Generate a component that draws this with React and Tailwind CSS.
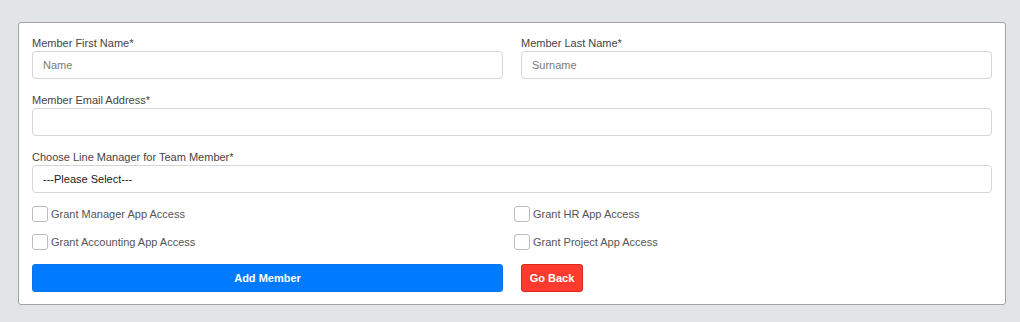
import React from "react";

const font = { fontFamily: '"Liberation Sans", Arial, sans-serif' };

function Field({ label, placeholder, className = "" }) {
  return (
    <div className={className}>
      <div className="h-[15px] text-[11px] leading-[15px] text-[#444]">{label}</div>
      <input
        placeholder={placeholder}
        className="block w-full h-[28px] border border-[#d6d6d6] rounded-[4px] px-[10px] text-[11px] text-[#333] placeholder:text-[#7a7a7a] outline-none bg-white"
      />
    </div>
  );
}

function Check({ label }) {
  return (
    <label className="flex items-center h-[28px] gap-[3px] text-[11px] text-[#555]">
      <span className="w-[16px] h-[16px] border border-[#bdbdbd] rounded-[3px] bg-white shrink-0" />
      <span>{label}</span>
    </label>
  );
}

export default function App() {
  return (
    <div className="w-[1020px] h-[322px] bg-[#e2e5e6] pt-[22px] pl-[18px]" style={font}>
      <div className="w-[988px] bg-white border border-[#a3a3a3] rounded-[3px] px-[13px] pt-[13px] pb-[12px]">
        <div className="grid grid-cols-2 gap-x-[18px]">
          <Field label="Member First Name*" placeholder="Name" />
          <Field label="Member Last Name*" placeholder="Surname" />
        </div>
        <Field className="mt-[14px]" label="Member Email Address*" placeholder="" />
        <div className="mt-[14px]">
          <div className="h-[15px] text-[11px] leading-[15px] text-[#444]">Choose Line Manager for Team Member*</div>
          <div className="h-[28px] border border-[#d6d6d6] rounded-[4px] px-[10px] flex items-center text-[11px] text-[#222]">
            ---Please Select---
          </div>
        </div>
        <div className="grid grid-cols-[482px_1fr] mt-[7px]">
          <Check label="Grant Manager App Access" />
          <Check label="Grant HR App Access" />
          <Check label="Grant Accounting App Access" />
          <Check label="Grant Project App Access" />
        </div>
        <div className="grid grid-cols-2 gap-x-[18px] mt-[8px]">
          <button className="h-[28px] rounded-[3px] bg-[#007bff] border border-[#0a74f0] text-white text-[11px] font-bold">
            Add Member
          </button>
          <div>
            <button className="h-[28px] w-[62px] rounded-[3px] bg-[#ff3b30] border border-[#d9261c] text-white text-[11px] font-bold">
              Go Back
            </button>
          </div>
        </div>
      </div>
    </div>
  );
}
